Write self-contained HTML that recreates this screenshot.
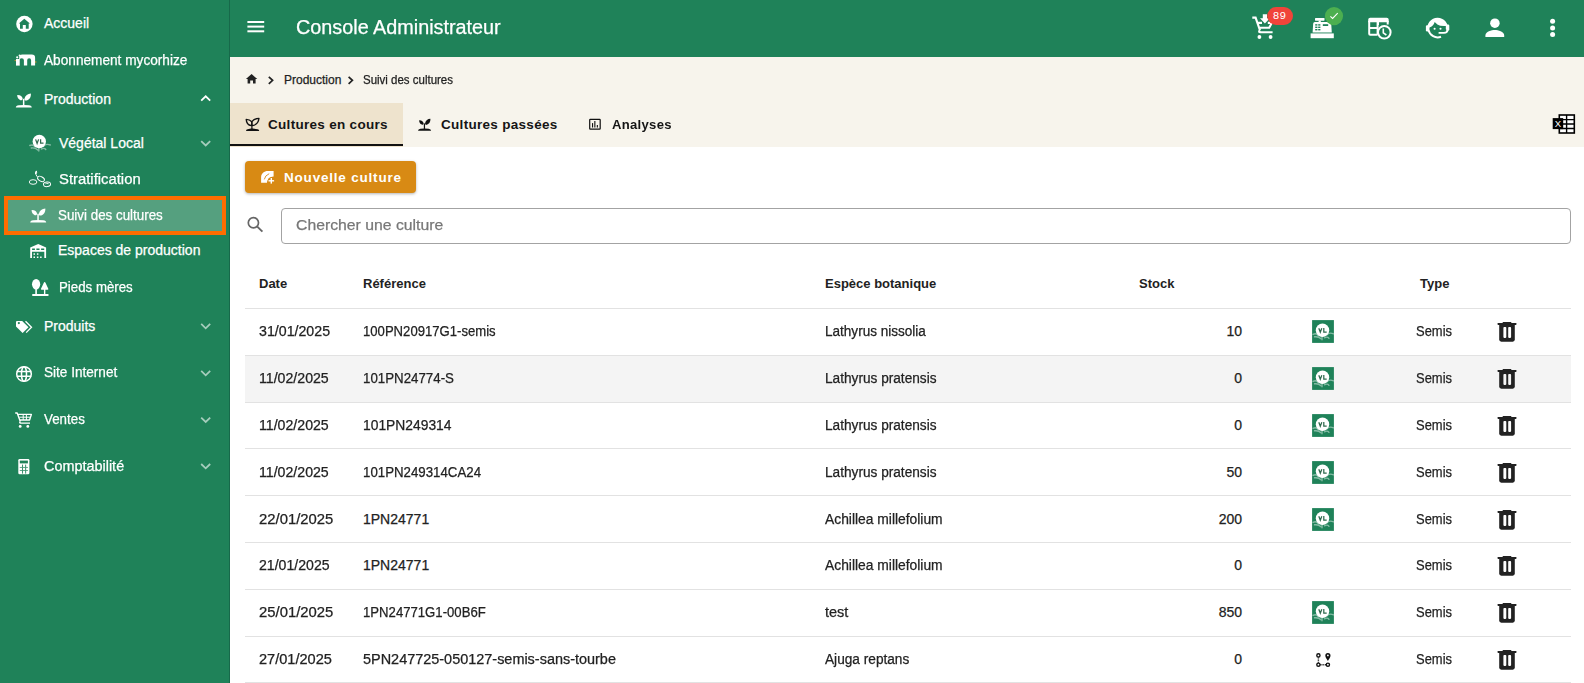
<!DOCTYPE html>
<html><head><meta charset="utf-8">
<style>
*{box-sizing:border-box;margin:0;padding:0}
html,body{width:1584px;height:683px;overflow:hidden;background:#fff}
body{position:relative;font-family:"Liberation Sans",sans-serif;color:#222}
.a{position:absolute}
.t{position:absolute;line-height:1;white-space:nowrap;-webkit-text-stroke:0.25px currentColor}
.b{-webkit-text-stroke:0}
#side{left:0;top:0;width:230px;height:683px;background:#1f8259;border-right:1px solid #17694a}
#hdr{left:230px;top:0;width:1354px;height:57px;background:#1f8259}
#crumb{left:230px;top:57px;width:1354px;height:90px;background:#f7f4ec}
#tabact{left:230px;top:103px;width:173px;height:44px;background:#eee3cd}
#tabline{left:230px;top:144px;width:173px;height:2px;background:#111}
#btn{left:245px;top:161px;width:171px;height:32px;background:#d88a14;border-radius:4px;box-shadow:0 1px 3px rgba(0,0,0,.3)}
#inp{left:281px;top:208px;width:1290px;height:36px;border:1px solid #a3a3a3;border-radius:4px}
.rl{left:245px;width:1326px;height:1px;background:#e2e2e2}
</style></head><body>
<div id="side" class="a"></div>
<div class="a" style="left:4px;top:196px;width:222px;height:39px;background:#55a07f;border:4px solid #ff6d00"></div>
<div id="hdr" class="a"></div>
<div id="crumb" class="a"></div>
<div id="tabact" class="a"></div>
<div id="tabline" class="a"></div>
<div id="btn" class="a"></div>
<div id="inp" class="a"></div>
<div class="a" style="left:245px;top:356px;width:1326px;height:46px;background:#f4f4f4"></div>
<div class="a rl" style="top:308.000px"></div>
<div class="a rl" style="top:355.000px"></div>
<div class="a rl" style="top:402.000px"></div>
<div class="a rl" style="top:448.000px"></div>
<div class="a rl" style="top:495.000px"></div>
<div class="a rl" style="top:542.000px"></div>
<div class="a rl" style="top:589.000px"></div>
<div class="a rl" style="top:636.000px"></div>
<div class="a rl" style="top:682.000px"></div>
<div class="t" style="top:16.000px;font-size:14px;color:#fff;left:44px;">Accueil</div>
<div class="t" style="top:53.000px;font-size:14px;color:#fff;left:44px;transform:scaleX(0.9750);transform-origin:left top;">Abonnement mycorhize</div>
<div class="t" style="top:92.000px;font-size:14px;color:#fff;left:44px;">Production</div>
<div class="t" style="top:136.000px;font-size:14px;color:#fff;left:59px;">Végétal Local</div>
<div class="t" style="top:172.000px;font-size:14px;color:#fff;left:59px;transform:scaleX(1.0600);transform-origin:left top;">Stratification</div>
<div class="t" style="top:208.000px;font-size:14px;color:#fff;left:58px;transform:scaleX(0.9550);transform-origin:left top;">Suivi des cultures</div>
<div class="t" style="top:243.000px;font-size:14px;color:#fff;left:58px;">Espaces de production</div>
<div class="t" style="top:280.000px;font-size:14px;color:#fff;left:59px;transform:scaleX(0.9480);transform-origin:left top;">Pieds mères</div>
<div class="t" style="top:319.000px;font-size:14px;color:#fff;left:44px;">Produits</div>
<div class="t" style="top:365.000px;font-size:14px;color:#fff;left:44px;transform:scaleX(0.9700);transform-origin:left top;">Site Internet</div>
<div class="t" style="top:412.000px;font-size:14px;color:#fff;left:44px;transform:scaleX(0.9530);transform-origin:left top;">Ventes</div>
<div class="t" style="top:459.000px;font-size:14px;color:#fff;left:44px;transform:scaleX(1.0300);transform-origin:left top;">Comptabilité</div>
<div class="t" style="top:17.000px;font-size:20px;color:#fff;left:296px;transform:scaleX(0.9900);transform-origin:left top;">Console Administrateur</div>
<div class="t" style="top:74.000px;font-size:12px;color:#222;left:284px;">Production</div>
<div class="t" style="top:74.000px;font-size:12px;color:#222;left:363px;transform:scaleX(0.9570);transform-origin:left top;">Suivi des cultures</div>
<div class="t b" style="top:118.000px;font-size:13.5px;color:#151515;left:268px;font-weight:700;letter-spacing:0.3px;">Cultures en cours</div>
<div class="t b" style="top:118.000px;font-size:13.5px;color:#151515;left:441px;font-weight:700;letter-spacing:0.3px;">Cultures passées</div>
<div class="t b" style="top:118.000px;font-size:13.5px;color:#151515;left:612px;font-weight:700;letter-spacing:0.3px;transform:scaleX(0.9700);transform-origin:left top;">Analyses</div>
<div class="t b" style="top:171.000px;font-size:13.5px;color:#fff;left:284px;font-weight:700;letter-spacing:0.8px;">Nouvelle culture</div>
<div class="t" style="top:217.000px;font-size:15.5px;color:#777;left:296px;transform:scaleX(1.0170);transform-origin:left top;">Chercher une culture</div>
<div class="t b" style="top:277.000px;font-size:13px;color:#222;left:259px;font-weight:700;">Date</div>
<div class="t b" style="top:277.000px;font-size:13px;color:#222;left:363px;font-weight:700;">Référence</div>
<div class="t b" style="top:277.000px;font-size:13px;color:#222;left:825px;font-weight:700;">Espèce botanique</div>
<div class="t b" style="top:277.000px;font-size:13px;color:#222;left:1139px;font-weight:700;">Stock</div>
<div class="t b" style="top:277.000px;font-size:13px;color:#222;left:1420px;font-weight:700;">Type</div>
<div class="t" style="top:324.000px;font-size:14px;color:#222;left:259px;transform:scaleX(1.0140);transform-origin:left top;">31/01/2025</div>
<div class="t" style="top:324.000px;font-size:14px;color:#222;left:363px;transform:scaleX(0.9366);transform-origin:left top;">100PN20917G1-semis</div>
<div class="t" style="top:324.000px;font-size:14px;color:#222;left:825px;transform:scaleX(0.9676);transform-origin:left top;">Lathyrus nissolia</div>
<div class="t" style="top:324.000px;font-size:14px;color:#222;right:342px;">10</div>
<div class="t" style="top:324.000px;font-size:14px;color:#222;left:1416px;transform:scaleX(0.9250);transform-origin:left top;">Semis</div>
<div class="t" style="top:371.000px;font-size:14px;color:#222;left:259px;transform:scaleX(1.0100);transform-origin:left top;">11/02/2025</div>
<div class="t" style="top:371.000px;font-size:14px;color:#222;left:363px;transform:scaleX(0.9499);transform-origin:left top;">101PN24774-S</div>
<div class="t" style="top:371.000px;font-size:14px;color:#222;left:825px;transform:scaleX(0.9747);transform-origin:left top;">Lathyrus pratensis</div>
<div class="t" style="top:371.000px;font-size:14px;color:#222;right:342px;">0</div>
<div class="t" style="top:371.000px;font-size:14px;color:#222;left:1416px;transform:scaleX(0.9250);transform-origin:left top;">Semis</div>
<div class="t" style="top:418.000px;font-size:14px;color:#222;left:259px;transform:scaleX(1.0100);transform-origin:left top;">11/02/2025</div>
<div class="t" style="top:418.000px;font-size:14px;color:#222;left:363px;transform:scaleX(0.9881);transform-origin:left top;">101PN249314</div>
<div class="t" style="top:418.000px;font-size:14px;color:#222;left:825px;transform:scaleX(0.9747);transform-origin:left top;">Lathyrus pratensis</div>
<div class="t" style="top:418.000px;font-size:14px;color:#222;right:342px;">0</div>
<div class="t" style="top:418.000px;font-size:14px;color:#222;left:1416px;transform:scaleX(0.9250);transform-origin:left top;">Semis</div>
<div class="t" style="top:465.000px;font-size:14px;color:#222;left:259px;transform:scaleX(1.0100);transform-origin:left top;">11/02/2025</div>
<div class="t" style="top:465.000px;font-size:14px;color:#222;left:363px;transform:scaleX(0.9478);transform-origin:left top;">101PN249314CA24</div>
<div class="t" style="top:465.000px;font-size:14px;color:#222;left:825px;transform:scaleX(0.9747);transform-origin:left top;">Lathyrus pratensis</div>
<div class="t" style="top:465.000px;font-size:14px;color:#222;right:342px;">50</div>
<div class="t" style="top:465.000px;font-size:14px;color:#222;left:1416px;transform:scaleX(0.9250);transform-origin:left top;">Semis</div>
<div class="t" style="top:512.000px;font-size:14px;color:#222;left:259px;transform:scaleX(1.0600);transform-origin:left top;">22/01/2025</div>
<div class="t" style="top:512.000px;font-size:14px;color:#222;left:363px;">1PN24771</div>
<div class="t" style="top:512.000px;font-size:14px;color:#222;left:825px;transform:scaleX(0.9882);transform-origin:left top;">Achillea millefolium</div>
<div class="t" style="top:512.000px;font-size:14px;color:#222;right:342px;">200</div>
<div class="t" style="top:512.000px;font-size:14px;color:#222;left:1416px;transform:scaleX(0.9250);transform-origin:left top;">Semis</div>
<div class="t" style="top:558.000px;font-size:14px;color:#222;left:259px;transform:scaleX(1.0070);transform-origin:left top;">21/01/2025</div>
<div class="t" style="top:558.000px;font-size:14px;color:#222;left:363px;">1PN24771</div>
<div class="t" style="top:558.000px;font-size:14px;color:#222;left:825px;transform:scaleX(0.9882);transform-origin:left top;">Achillea millefolium</div>
<div class="t" style="top:558.000px;font-size:14px;color:#222;right:342px;">0</div>
<div class="t" style="top:558.000px;font-size:14px;color:#222;left:1416px;transform:scaleX(0.9250);transform-origin:left top;">Semis</div>
<div class="t" style="top:605.000px;font-size:14px;color:#222;left:259px;transform:scaleX(1.0600);transform-origin:left top;">25/01/2025</div>
<div class="t" style="top:605.000px;font-size:14px;color:#222;left:363px;transform:scaleX(0.9388);transform-origin:left top;">1PN24771G1-00B6F</div>
<div class="t" style="top:605.000px;font-size:14px;color:#222;left:825px;transform:scaleX(1.0354);transform-origin:left top;">test</div>
<div class="t" style="top:605.000px;font-size:14px;color:#222;right:342px;">850</div>
<div class="t" style="top:605.000px;font-size:14px;color:#222;left:1416px;transform:scaleX(0.9250);transform-origin:left top;">Semis</div>
<div class="t" style="top:652.000px;font-size:14px;color:#222;left:259px;transform:scaleX(1.0400);transform-origin:left top;">27/01/2025</div>
<div class="t" style="top:652.000px;font-size:14px;color:#222;left:363px;transform:scaleX(1.0318);transform-origin:left top;">5PN247725-050127-semis-sans-tourbe</div>
<div class="t" style="top:652.000px;font-size:14px;color:#222;left:825px;transform:scaleX(0.9757);transform-origin:left top;">Ajuga reptans</div>
<div class="t" style="top:652.000px;font-size:14px;color:#222;right:342px;">0</div>
<div class="t" style="top:652.000px;font-size:14px;color:#222;left:1416px;transform:scaleX(0.9250);transform-origin:left top;">Semis</div>
<svg id="ov" style="position:absolute;left:0;top:0" width="1584" height="683" viewBox="0 0 1584 683">
<defs><filter id="bl" x="-50%" y="-50%" width="200%" height="200%"><feGaussianBlur stdDeviation="0.45"/></filter></defs>
<circle cx="24.4" cy="24" r="8.2" fill="#fff"/>
<path d="M24.3 18.8 L29.9 23.5 H28.7 V28.7 H25.8 V25.1 H22.8 V28.7 H20 V23.5 H18.8 Z" fill="#1f8259"/>
<path d="M19.2 65.6 V57.6 Q19.2 54.5 22.3 54.5 H31.8 Q35.1 54.5 35.1 57.8 V65.6 H31.1 V60.2 Q31.1 58.2 29.15 58.2 Q27.2 58.2 27.2 60.2 V65.6 H23.9 V60.2 Q23.9 58.2 21.7 58.2 Q19.5 58.2 19.5 60.2 V65.6 Z" fill="#fff"/>
<rect x="16" y="59" width="3.6" height="6.6" fill="#fff"/>
<circle cx="17.2" cy="57.3" r="1.1" fill="#fff"/><circle cx="19.6" cy="55.4" r="1.0" fill="#fff"/><circle cx="15.2" cy="60.6" r="0.7" fill="#e39a2a"/><circle cx="35.8" cy="62" r="0.7" fill="#e39a2a"/>
<g transform="translate(15.8 93.2) scale(1.0 1.0)" fill="#fff"><path d="M0 14.4 Q0 12.3 3 12 Q8 11.4 13 12 Q16 12.3 16 14.4 Z"/><rect x="7.1" y="5.6" width="1.5" height="6.6"/><path d="M1.4 1.9 C4.5 1.7 6.6 3.4 6.9 5.6 C6.8 6.8 5.6 7.4 4.6 7 C2.6 6.2 1.4 4.4 1.4 1.9 Z"/><path d="M15.1 0.2 C15.4 4.2 13.2 7 9.8 7.4 C8.9 7.2 8.5 6.2 8.7 5.2 C9.4 2.2 11.8 0.4 15.1 0.2 Z"/></g>
<g transform="translate(30.2 208.2) scale(1.0 1.0)" fill="#fff"><path d="M0 14.4 Q0 12.3 3 12 Q8 11.4 13 12 Q16 12.3 16 14.4 Z"/><rect x="7.1" y="5.6" width="1.5" height="6.6"/><path d="M1.4 1.9 C4.5 1.7 6.6 3.4 6.9 5.6 C6.8 6.8 5.6 7.4 4.6 7 C2.6 6.2 1.4 4.4 1.4 1.9 Z"/><path d="M15.1 0.2 C15.4 4.2 13.2 7 9.8 7.4 C8.9 7.2 8.5 6.2 8.7 5.2 C9.4 2.2 11.8 0.4 15.1 0.2 Z"/></g>
<path d="M201.2 100.69999999999999 L205.7 96.3 L210.2 100.69999999999999" fill="none" stroke="#fff" stroke-width="1.75" opacity="1.0"/>
<path d="M201.2 141.1 L205.7 145.5 L210.2 141.1" fill="none" stroke="#fff" stroke-width="1.75" opacity="0.6"/>
<path d="M201.2 323.9 L205.7 328.29999999999995 L210.2 323.9" fill="none" stroke="#fff" stroke-width="1.75" opacity="0.6"/>
<path d="M201.2 370.9 L205.7 375.29999999999995 L210.2 370.9" fill="none" stroke="#fff" stroke-width="1.75" opacity="0.6"/>
<path d="M201.2 417.6 L205.7 422.0 L210.2 417.6" fill="none" stroke="#fff" stroke-width="1.75" opacity="0.6"/>
<path d="M201.2 464.0 L205.7 468.4 L210.2 464.0" fill="none" stroke="#fff" stroke-width="1.75" opacity="0.6"/>
<g opacity="0.45" stroke="#fff" stroke-width="1.4" fill="none" stroke-linecap="round" filter="url(#bl)"><path d="M29.799999999999997 145.5 Q33.3 144.0 35.3 147.0"/><path d="M31.299999999999997 148.0 Q35.3 147.5 37.8 150.0"/><path d="M43.8 146.0 Q46.3 143.3 50.3 145.0"/><path d="M41.3 149.0 Q44.3 147.5 45.8 149.5"/><path d="M38.8 147.5 V151.0"/></g><circle cx="39.3" cy="141.5" r="6.7" fill="#fff"/><path d="M35.599999999999994 139.4 L37.099999999999994 143.5 L38.599999999999994 139.4 M40.599999999999994 139.2 V143.2 H43.5" fill="none" stroke="#2f6a4e" stroke-width="1.25"/>
<g fill="none" stroke="#fff" stroke-width="0.95"><ellipse cx="33.1" cy="182" rx="3.8" ry="2.3"/><ellipse cx="41" cy="178.9" rx="3.7" ry="2.2" transform="rotate(28 41 178.9)"/><ellipse cx="47" cy="184.3" rx="3.6" ry="2.3" transform="rotate(-8 47 184.3)"/><path d="M37.4 176.9 Q35.5 175 35.8 172.6"/><path d="M35.6 174 Q35.2 171.8 36.4 170.9 Q37.2 172.7 35.6 174Z" fill="#fff"/><path d="M45.5 184.2 l1.2 -1.4 l1.2 1.3 M48 183.7 l1 -1"/></g>
<path d="M30.2 258 V247.5 L38.25 243.9 L46.1 247.5 V258 H44.3 V251.8 H32 V258 Z" fill="#fff"/><g fill="#1f8259"><rect x="32.1" y="248.5" width="2.8" height="1.5"/><rect x="36.4" y="248.5" width="3.1" height="1.5"/><rect x="41.1" y="248.5" width="3.1" height="1.5"/></g><g fill="#fff"><rect x="33.5" y="253.3" width="1.5" height="1.5"/><rect x="36.9" y="253.3" width="1.5" height="1.5"/><rect x="33.5" y="256.5" width="1.5" height="1.5"/><rect x="36.9" y="256.5" width="1.5" height="1.5"/><rect x="40.1" y="256.5" width="1.5" height="1.5"/></g>
<g fill="#fff"><ellipse cx="36.1" cy="284.2" rx="4.1" ry="5.3"/><rect x="35.3" y="288" width="1.6" height="6"/><path d="M44.65 282.1 Q45.2 282.1 45.6 283 L48.3 288.8 Q48.6 289.8 47.6 289.8 H41.7 Q40.7 289.8 41 288.8 L43.7 283 Q44.1 282.1 44.65 282.1 Z"/><rect x="43.95" y="289" width="1.4" height="5"/><rect x="32" y="293.9" width="16.7" height="2.1" rx="1"/></g>
<path d="M16 322 Q16 320.9 17.1 320.9 H22.2 L28.5 327.2 L22.6 333 L16 326.4 Z" fill="#fff"/><circle cx="18.85" cy="323.1" r="1.1" fill="#1f8259"/><path d="M25.5 321.2 L31.5 327.3 L26.2 332.6" fill="none" stroke="#fff" stroke-width="1.3"/>
<g fill="none" stroke="#fff" stroke-width="1.5"><circle cx="24" cy="374" r="7.3"/><ellipse cx="24" cy="374" rx="2.5" ry="7.3"/><path d="M16.8 371.4 H31.2 M16.8 376.3 H31.2"/></g>
<g fill="none" stroke="#fff" stroke-width="1.4" stroke-linejoin="round"><path d="M15.2 413 H17.2 L20.3 421.6 M18.4 414.4 H31.4 L29.6 420 H20.2"/><path d="M20.3 421.6 Q19 423.1 20.6 423.1 H30"/><path d="M23.2 414.4 V420 M26.4 414.4 V420 M19.3 417.2 H30.5" stroke-width="1"/></g><g fill="#fff"><circle cx="20.2" cy="426.4" r="1.4"/><circle cx="27.8" cy="426.4" r="1.4"/></g>
<g><rect x="18.3" y="459" width="11.1" height="15.3" rx="1.3" fill="#fff"/><rect x="19.8" y="460.6" width="8.1" height="2.8" fill="#1f8259"/><rect x="22.13" y="464.60" width="0.9" height="2.8" fill="#1f8259"/><rect x="25.23" y="464.60" width="0.9" height="2.8" fill="#1f8259"/><rect x="22.13" y="467.70" width="0.9" height="2.8" fill="#1f8259"/><rect x="25.23" y="467.70" width="0.9" height="2.8" fill="#1f8259"/><rect x="22.13" y="470.80" width="0.9" height="2.8" fill="#1f8259"/><rect x="25.23" y="470.80" width="0.9" height="2.8" fill="#1f8259"/><rect x="19.8" y="466.97" width="8.1" height="0.7" fill="#1f8259"/><rect x="19.8" y="470.07" width="8.1" height="0.7" fill="#1f8259"/></g>
<g fill="#fff"><rect x="247.4" y="21" width="16.8" height="2"/><rect x="247.4" y="25.6" width="16.8" height="2"/><rect x="247.4" y="30.3" width="16.8" height="2"/></g>
<g fill="none" stroke="#fff" stroke-width="2.1" stroke-linejoin="miter"><path d="M1252.3 17.6 H1255.6 L1260 30.4 M1256.8 22.9 H1262 M1267.8 22.9 H1271.8 L1269.2 27.8 H1258.4" /><path d="M1260 30.4 Q1258.2 32 1260 32.2 H1272.6"/></g><g fill="#fff"><circle cx="1259.4" cy="37" r="1.9"/><circle cx="1270.6" cy="37" r="1.9"/><path d="M1262.8 14.2 H1267 V18.2 H1269.8 L1264.9 23.4 L1260 18.2 H1262.8 Z"/></g>
<rect x="1267.2" y="7" width="25.8" height="18" rx="9" fill="#f0443a"/>
<text x="1279.6" y="18.9" font-family="Liberation Mono" font-size="11" fill="#fff" text-anchor="middle" letter-spacing="0.3">89</text>
<g fill="#fff"><rect x="1310.6" y="33.4" width="23.2" height="4.8"/><path d="M1312.6 32.4 L1313.2 23.4 Q1313.3 21.9 1314.8 21.9 H1329.6 Q1331.1 21.9 1331.2 23.4 L1331.8 32.4 Z"/><rect x="1315" y="17.9" width="9.5" height="2.8" rx="0.6"/><rect x="1318.6" y="20.5" width="2.2" height="2"/></g><g fill="#1f8259"><rect x="1315.2" y="24.2" width="2.2" height="1.4"/><rect x="1318.2" y="24.2" width="2.2" height="1.4"/><rect x="1315.2" y="26.6" width="2.2" height="1.4"/><rect x="1318.2" y="26.6" width="2.2" height="1.4"/><rect x="1315.2" y="29" width="2.2" height="1.4"/><rect x="1318.2" y="29" width="2.2" height="1.4"/><rect x="1322.8" y="24.2" width="5.4" height="1.8"/></g>
<circle cx="1334" cy="16.1" r="9.1" fill="#4caf50"/><path d="M1330.4 16.4 L1332.6 18.4 L1337.7 13.2" fill="none" stroke="#fff" stroke-width="1.1"/>
<g fill="#fff"><path d="M1370.2 17.8 H1386.7 Q1388.7 17.8 1388.7 19.8 V22.2 H1368.2 V19.8 Q1368.2 17.8 1370.2 17.8 Z"/></g><g fill="none" stroke="#fff" stroke-width="2"><path d="M1377.5 34.8 H1370.2 Q1369.2 34.8 1369.2 33.8 V21 M1387.7 21 V24.6"/><path d="M1369.2 27.9 H1377.2 M1377.6 21.5 V34.8 M1378 21.5 V25"/><circle cx="1384.3" cy="32.3" r="6.3"/><path d="M1383.3 28.4 V32.9 L1386.4 35" stroke-width="1.6"/></g>
<path d="M1446.8 29.5 A9.3 9.3 0 1 0 1441 36.7" fill="none" stroke="#fff" stroke-width="2"/><path d="M1428.3 28 A9.3 9.3 0 0 1 1446.9 28 L1446.2 26 Q1440 26.4 1437.4 24.4 L1434.7 21.9 Q1433.4 26 1429.4 27.6 Z" fill="#fff"/><path d="M1447.6 29.5 Q1447.4 32.9 1444 32.9 H1438.6" fill="none" stroke="#fff" stroke-width="1.9"/><g fill="#fff"><rect x="1425.9" y="25.2" width="3" height="6.2" rx="1.2"/><rect x="1446.3" y="24.6" width="3" height="6" rx="1.2"/><circle cx="1434.6" cy="28.8" r="1.05"/><circle cx="1440.5" cy="28.8" r="1.05"/></g>
<g fill="#fff"><circle cx="1494.9" cy="23.2" r="4.75"/><path d="M1485.4 37 V35.5 C1485.4 31.8 1491.6 30.1 1494.8 30.1 C1498 30.1 1504.2 31.8 1504.2 35.5 V37 Z"/></g>
<g fill="#fff"><circle cx="1552.6" cy="21.3" r="2.5"/><circle cx="1552.6" cy="27.9" r="2.5"/><circle cx="1552.6" cy="34.5" r="2.5"/></g>
<path d="M251.6 74 L257.3 79.1 H255.6 V83.5 H253 V80.4 H250.2 V83.5 H247.6 V79.1 H245.9 Z" fill="#222"/>
<path d="M268.8 76.8 L272.6 80.3 L268.8 83.8" fill="none" stroke="#222" stroke-width="1.7"/>
<path d="M348.6 76.8 L352.4 80.3 L348.6 83.8" fill="none" stroke="#222" stroke-width="1.7"/>
<g fill="none" stroke="#111" stroke-width="1.3" stroke-linejoin="round"><path d="M246.2 119.4 Q249.6 119.4 251.8 121.7 Q252.1 124.6 251.3 125.6 Q246.5 125 246.2 119.4 Z"/><path d="M259 118.3 Q254.3 118.4 251.9 121.7 Q251.6 124.6 252.5 125.6 Q258.4 124.6 259 118.3 Z"/><path d="M251.9 125 V129" stroke-width="1.2"/></g><path d="M246 131 Q246 129.5 247.6 129.3 L251 128.6 H252.8 L257.6 129.3 Q259.2 129.5 259.2 131 Z" fill="#111"/>
<g transform="translate(418 118.7) scale(0.82 0.84)" fill="#111"><path d="M0 14.4 Q0 12.3 3 12 Q8 11.4 13 12 Q16 12.3 16 14.4 Z"/><rect x="7.1" y="5.6" width="1.5" height="6.6"/><path d="M1.4 1.9 C4.5 1.7 6.6 3.4 6.9 5.6 C6.8 6.8 5.6 7.4 4.6 7 C2.6 6.2 1.4 4.4 1.4 1.9 Z"/><path d="M15.1 0.2 C15.4 4.2 13.2 7 9.8 7.4 C8.9 7.2 8.5 6.2 8.7 5.2 C9.4 2.2 11.8 0.4 15.1 0.2 Z"/></g>
<g><rect x="589.7" y="119.4" width="10.5" height="9.8" rx="0.6" fill="none" stroke="#111" stroke-width="1.2"/><rect x="592" y="123.1" width="1.1" height="4.4" fill="#111"/><rect x="594.3" y="121" width="1.1" height="6.5" fill="#111"/><rect x="596.8" y="125" width="1.1" height="2.5" fill="#111"/></g>
<g><rect x="1559.3" y="115" width="15" height="18" fill="#fff" stroke="#000" stroke-width="1.6"/><path d="M1566.6 115 V133 M1559.3 119.6 H1574.3 M1559.3 124 H1574.3 M1559.3 128.5 H1574.3" stroke="#000" stroke-width="1.4"/><rect x="1552.7" y="118.1" width="10.5" height="11" fill="#000"/><text x="1557.9" y="127.3" font-family="Liberation Sans" font-size="9.6" fill="#fff" text-anchor="middle">X</text></g>
<path d="M261.1 182.7 V177.5 C261.1 173.6 264 171.1 268 171.1 H273.6 V176.4 C270 176.4 267.2 179.2 267 182.7 Z" fill="#fff"/><path d="M264.3 179.4 Q265 175.4 269.2 173.7" fill="none" stroke="#d88a14" stroke-width="0.9"/><circle cx="271.3" cy="180.8" r="3.4" fill="#d88a14"/><g fill="#fff"><rect x="270.6" y="178" width="1.4" height="5.6"/><rect x="268.5" y="180.1" width="5.6" height="1.4"/></g>
<g fill="none" stroke="#666" stroke-width="1.7"><circle cx="253.4" cy="222.7" r="5.1"/><path d="M257.3 226.6 L262.4 231.6" stroke-width="1.9"/></g>
<rect x="1312.1" y="320.10" width="21.8" height="22.8" fill="#1f8259"/>
<g opacity="0.45" stroke="#fff" stroke-width="1.4" fill="none" stroke-linecap="round" filter="url(#bl)"><path d="M1313.0 334.3 Q1316.5 332.8 1318.5 335.8"/><path d="M1314.5 336.8 Q1318.5 336.3 1321.0 338.8"/><path d="M1327.0 334.8 Q1329.5 332.1 1333.5 333.8"/><path d="M1324.5 337.8 Q1327.5 336.3 1329.0 338.3"/><path d="M1322.0 336.3 V339.8"/></g><circle cx="1322.5" cy="330.3" r="6.7" fill="#fff"/><path d="M1318.8 328.2 L1320.3 332.3 L1321.8 328.2 M1323.8 328.0 V332.0 H1326.7" fill="none" stroke="#2f6a4e" stroke-width="1.25"/>
<g fill="#222" transform="translate(1495 320.200)"><rect x="7.6" y="1.9" width="8.8" height="1.6" rx="0.6"/><rect x="2.6" y="2.9" width="18.8" height="1.8" rx="0.4"/><path d="M4.2 4.5 H19.8 V19.4 Q19.8 21.5 17.7 21.5 H6.3 Q4.2 21.5 4.2 19.4 Z"/></g><g fill="#fff" transform="translate(1495 320.200)"><rect x="8.4" y="6.9" width="2.9" height="10.8" rx="0.8"/><rect x="13.2" y="6.9" width="2.9" height="10.8" rx="0.8"/></g>
<rect x="1312.1" y="367.10" width="21.8" height="22.8" fill="#1f8259"/>
<g opacity="0.45" stroke="#fff" stroke-width="1.4" fill="none" stroke-linecap="round" filter="url(#bl)"><path d="M1313.0 381.3 Q1316.5 379.8 1318.5 382.8"/><path d="M1314.5 383.8 Q1318.5 383.3 1321.0 385.8"/><path d="M1327.0 381.8 Q1329.5 379.1 1333.5 380.8"/><path d="M1324.5 384.8 Q1327.5 383.3 1329.0 385.3"/><path d="M1322.0 383.3 V386.8"/></g><circle cx="1322.5" cy="377.3" r="6.7" fill="#fff"/><path d="M1318.8 375.2 L1320.3 379.3 L1321.8 375.2 M1323.8 375.0 V379.0 H1326.7" fill="none" stroke="#2f6a4e" stroke-width="1.25"/>
<g fill="#222" transform="translate(1495 367.200)"><rect x="7.6" y="1.9" width="8.8" height="1.6" rx="0.6"/><rect x="2.6" y="2.9" width="18.8" height="1.8" rx="0.4"/><path d="M4.2 4.5 H19.8 V19.4 Q19.8 21.5 17.7 21.5 H6.3 Q4.2 21.5 4.2 19.4 Z"/></g><g fill="#f4f4f4" transform="translate(1495 367.200)"><rect x="8.4" y="6.9" width="2.9" height="10.8" rx="0.8"/><rect x="13.2" y="6.9" width="2.9" height="10.8" rx="0.8"/></g>
<rect x="1312.1" y="414.10" width="21.8" height="22.8" fill="#1f8259"/>
<g opacity="0.45" stroke="#fff" stroke-width="1.4" fill="none" stroke-linecap="round" filter="url(#bl)"><path d="M1313.0 428.3 Q1316.5 426.8 1318.5 429.8"/><path d="M1314.5 430.8 Q1318.5 430.3 1321.0 432.8"/><path d="M1327.0 428.8 Q1329.5 426.1 1333.5 427.8"/><path d="M1324.5 431.8 Q1327.5 430.3 1329.0 432.3"/><path d="M1322.0 430.3 V433.8"/></g><circle cx="1322.5" cy="424.3" r="6.7" fill="#fff"/><path d="M1318.8 422.2 L1320.3 426.3 L1321.8 422.2 M1323.8 422.0 V426.0 H1326.7" fill="none" stroke="#2f6a4e" stroke-width="1.25"/>
<g fill="#222" transform="translate(1495 414.200)"><rect x="7.6" y="1.9" width="8.8" height="1.6" rx="0.6"/><rect x="2.6" y="2.9" width="18.8" height="1.8" rx="0.4"/><path d="M4.2 4.5 H19.8 V19.4 Q19.8 21.5 17.7 21.5 H6.3 Q4.2 21.5 4.2 19.4 Z"/></g><g fill="#fff" transform="translate(1495 414.200)"><rect x="8.4" y="6.9" width="2.9" height="10.8" rx="0.8"/><rect x="13.2" y="6.9" width="2.9" height="10.8" rx="0.8"/></g>
<rect x="1312.1" y="461.10" width="21.8" height="22.8" fill="#1f8259"/>
<g opacity="0.45" stroke="#fff" stroke-width="1.4" fill="none" stroke-linecap="round" filter="url(#bl)"><path d="M1313.0 475.3 Q1316.5 473.8 1318.5 476.8"/><path d="M1314.5 477.8 Q1318.5 477.3 1321.0 479.8"/><path d="M1327.0 475.8 Q1329.5 473.1 1333.5 474.8"/><path d="M1324.5 478.8 Q1327.5 477.3 1329.0 479.3"/><path d="M1322.0 477.3 V480.8"/></g><circle cx="1322.5" cy="471.3" r="6.7" fill="#fff"/><path d="M1318.8 469.2 L1320.3 473.3 L1321.8 469.2 M1323.8 469.0 V473.0 H1326.7" fill="none" stroke="#2f6a4e" stroke-width="1.25"/>
<g fill="#222" transform="translate(1495 461.200)"><rect x="7.6" y="1.9" width="8.8" height="1.6" rx="0.6"/><rect x="2.6" y="2.9" width="18.8" height="1.8" rx="0.4"/><path d="M4.2 4.5 H19.8 V19.4 Q19.8 21.5 17.7 21.5 H6.3 Q4.2 21.5 4.2 19.4 Z"/></g><g fill="#fff" transform="translate(1495 461.200)"><rect x="8.4" y="6.9" width="2.9" height="10.8" rx="0.8"/><rect x="13.2" y="6.9" width="2.9" height="10.8" rx="0.8"/></g>
<rect x="1312.1" y="508.10" width="21.8" height="22.8" fill="#1f8259"/>
<g opacity="0.45" stroke="#fff" stroke-width="1.4" fill="none" stroke-linecap="round" filter="url(#bl)"><path d="M1313.0 522.3 Q1316.5 520.8 1318.5 523.8"/><path d="M1314.5 524.8 Q1318.5 524.3 1321.0 526.8"/><path d="M1327.0 522.8 Q1329.5 520.0999999999999 1333.5 521.8"/><path d="M1324.5 525.8 Q1327.5 524.3 1329.0 526.3"/><path d="M1322.0 524.3 V527.8"/></g><circle cx="1322.5" cy="518.3" r="6.7" fill="#fff"/><path d="M1318.8 516.1999999999999 L1320.3 520.3 L1321.8 516.1999999999999 M1323.8 516.0 V520.0 H1326.7" fill="none" stroke="#2f6a4e" stroke-width="1.25"/>
<g fill="#222" transform="translate(1495 508.200)"><rect x="7.6" y="1.9" width="8.8" height="1.6" rx="0.6"/><rect x="2.6" y="2.9" width="18.8" height="1.8" rx="0.4"/><path d="M4.2 4.5 H19.8 V19.4 Q19.8 21.5 17.7 21.5 H6.3 Q4.2 21.5 4.2 19.4 Z"/></g><g fill="#fff" transform="translate(1495 508.200)"><rect x="8.4" y="6.9" width="2.9" height="10.8" rx="0.8"/><rect x="13.2" y="6.9" width="2.9" height="10.8" rx="0.8"/></g>
<g fill="#222" transform="translate(1495 554.200)"><rect x="7.6" y="1.9" width="8.8" height="1.6" rx="0.6"/><rect x="2.6" y="2.9" width="18.8" height="1.8" rx="0.4"/><path d="M4.2 4.5 H19.8 V19.4 Q19.8 21.5 17.7 21.5 H6.3 Q4.2 21.5 4.2 19.4 Z"/></g><g fill="#fff" transform="translate(1495 554.200)"><rect x="8.4" y="6.9" width="2.9" height="10.8" rx="0.8"/><rect x="13.2" y="6.9" width="2.9" height="10.8" rx="0.8"/></g>
<rect x="1312.1" y="601.10" width="21.8" height="22.8" fill="#1f8259"/>
<g opacity="0.45" stroke="#fff" stroke-width="1.4" fill="none" stroke-linecap="round" filter="url(#bl)"><path d="M1313.0 615.3 Q1316.5 613.8 1318.5 616.8"/><path d="M1314.5 617.8 Q1318.5 617.3 1321.0 619.8"/><path d="M1327.0 615.8 Q1329.5 613.0999999999999 1333.5 614.8"/><path d="M1324.5 618.8 Q1327.5 617.3 1329.0 619.3"/><path d="M1322.0 617.3 V620.8"/></g><circle cx="1322.5" cy="611.3" r="6.7" fill="#fff"/><path d="M1318.8 609.1999999999999 L1320.3 613.3 L1321.8 609.1999999999999 M1323.8 609.0 V613.0 H1326.7" fill="none" stroke="#2f6a4e" stroke-width="1.25"/>
<g fill="#222" transform="translate(1495 601.200)"><rect x="7.6" y="1.9" width="8.8" height="1.6" rx="0.6"/><rect x="2.6" y="2.9" width="18.8" height="1.8" rx="0.4"/><path d="M4.2 4.5 H19.8 V19.4 Q19.8 21.5 17.7 21.5 H6.3 Q4.2 21.5 4.2 19.4 Z"/></g><g fill="#fff" transform="translate(1495 601.200)"><rect x="8.4" y="6.9" width="2.9" height="10.8" rx="0.8"/><rect x="13.2" y="6.9" width="2.9" height="10.8" rx="0.8"/></g>
<g fill="none" stroke="#111" stroke-width="1.4"><circle cx="1318.4" cy="655.40" r="1.6"/><circle cx="1318.4" cy="664.70" r="1.6"/><circle cx="1327.9" cy="664.70" r="1.6"/><path d="M1318.4 657.40 V662.80 M1320.3 664.70 H1326" stroke-dasharray="1.2 1"/></g><path d="M1327.9 661.00 C1326.4 658.60 1325.3 657.20 1325.3 655.50 A2.6 2.6 0 1 1 1330.5 655.50 C1330.5 657.20 1329.4 658.60 1327.9 661.00 Z" fill="#111"/><circle cx="1327.9" cy="655.40" r="0.9" fill="#fff"/>
<g fill="#222" transform="translate(1495 648.200)"><rect x="7.6" y="1.9" width="8.8" height="1.6" rx="0.6"/><rect x="2.6" y="2.9" width="18.8" height="1.8" rx="0.4"/><path d="M4.2 4.5 H19.8 V19.4 Q19.8 21.5 17.7 21.5 H6.3 Q4.2 21.5 4.2 19.4 Z"/></g><g fill="#fff" transform="translate(1495 648.200)"><rect x="8.4" y="6.9" width="2.9" height="10.8" rx="0.8"/><rect x="13.2" y="6.9" width="2.9" height="10.8" rx="0.8"/></g>
</svg>
</body></html>
